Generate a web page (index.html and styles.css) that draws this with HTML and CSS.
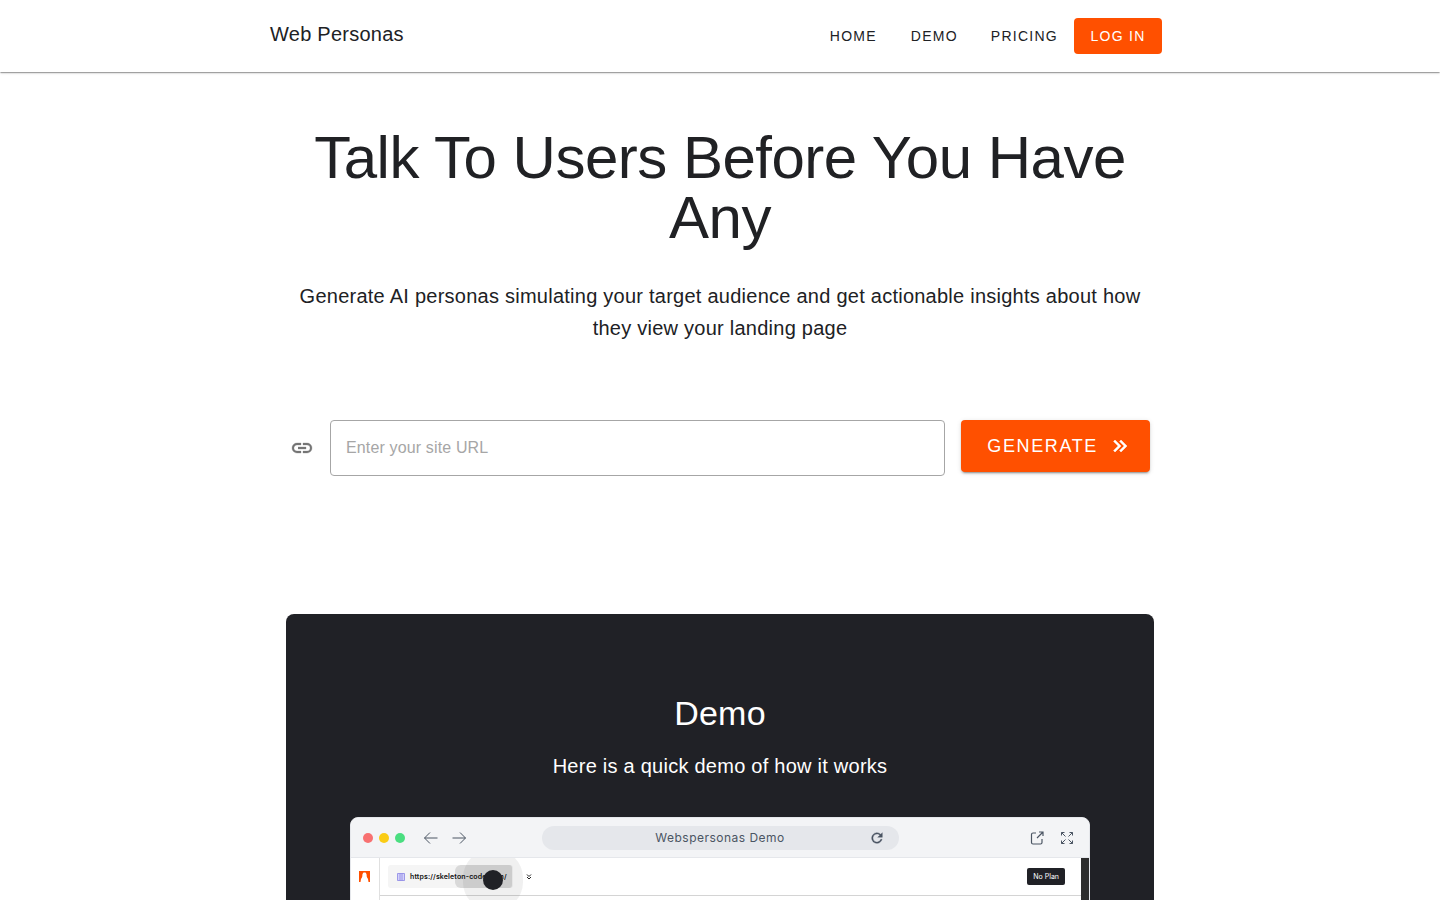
FILE: index.html
```html
<!DOCTYPE html>
<html lang="en">
<head>
<meta charset="utf-8">
<meta name="viewport" content="width=device-width, initial-scale=1">
<title>Web Personas</title>
<link rel="stylesheet" href="styles.css">
</head>
<body>
<header class="app-bar">
  <div class="app-bar-inner">
    <a class="brand" href="#">Web Personas</a>
    <nav class="nav">
      <a class="nav-link" href="#">HOME</a>
      <a class="nav-link" href="#demo">DEMO</a>
      <a class="nav-link" href="#pricing">PRICING</a>
      <a class="nav-link nav-primary" href="#login">LOG IN</a>
    </nav>
  </div>
</header>
<main class="container">
  <section class="hero">
    <h1 class="hero-title">Talk To Users Before You Have Any</h1>
    <p class="lead">Generate AI personas simulating your target audience and get actionable insights about how they view your landing page</p>
  </section>
  <form class="url-form">
    <label class="url-label" for="site-url" aria-label="Site URL">
      <svg width="24" height="24" viewBox="0 0 24 24" fill="currentColor" stroke="currentColor" stroke-width=".3"><path d="M3.9 12c0-1.71 1.39-3.1 3.1-3.1h4V7H7a5 5 0 0 0 0 10h4v-1.9H7c-1.71 0-3.1-1.39-3.1-3.1M8 13h8v-2H8m9-4h-4v1.9h4a3.1 3.1 0 0 1 0 6.2h-4V17h4a5 5 0 0 0 0-10"/></svg>
    </label>
    <input class="url-input" id="site-url" type="url" placeholder="Enter your site URL">
    <button class="generate" type="button"><span>GENERATE</span>
      <svg width="24" height="24" viewBox="0 0 24 24" fill="currentColor" stroke="currentColor" stroke-width=".5"><path d="M5.59 7.41 7 6l6 6-6 6-1.41-1.41L10.17 12zm6 0L13 6l6 6-6 6-1.41-1.41L16.17 12z"/></svg>
    </button>
  </form>
  <section class="demo" id="demo">
    <h2 class="demo-title">Demo</h2>
    <p class="demo-lead">Here is a quick demo of how it works</p>
    <div class="browser">
      <div class="toolbar">
        <div class="toolbar-side">
          <span class="dot dot-red"></span><span class="dot dot-yellow"></span><span class="dot dot-green"></span>
          <button class="icon-button arrow-back" type="button" aria-label="Back"><svg width="16" height="16" viewBox="0 0 16 16" fill="none" stroke="currentColor"><path d="M14.500 8H1.500M7 2.500 1.500 8 7 13.500"/></svg></button>
          <button class="icon-button" type="button" aria-label="Forward"><svg width="16" height="16" viewBox="0 0 16 16" fill="none" stroke="currentColor"><path d="M1.500 8h13M9 2.500 14.500 8 9 13.500"/></svg></button>
        </div>
        <div class="address">
          <span class="address-text">Webspersonas Demo</span>
          <button class="icon-button reload" type="button" aria-label="Reload"><svg width="16" height="16" viewBox="0 0 24 24" fill="currentColor" stroke="currentColor" stroke-width=".5"><path d="M17.65 6.35A8 8 0 1 0 19.73 14h-2.080A6 6 0 1 1 12 6c1.660 0 3.140.69 4.220 1.780L13 11h7V4z"/></svg></button>
        </div>
        <div class="toolbar-side toolbar-end">
          <button class="icon-button" type="button" aria-label="Open in new tab"><svg width="14" height="14" viewBox="0 0 14 14" fill="none" stroke="currentColor" stroke-width="1.200"><path d="M6 2H3a1.500 1.500 0 0 0-1.500 1.500v8A1.500 1.500 0 0 0 3 13h7.500a1.500 1.500 0 0 0 1.500-1.500V8M7 7l6-6M9 1h4v4"/></svg></button>
          <button class="icon-button" type="button" aria-label="Full screen"><svg width="14" height="14" viewBox="0 0 14 14" fill="none" stroke="currentColor"><path d="M1.500 4.500v-3h3M1.500 1.500l4 4M9.500 1.500h3v3M12.500 1.500l-4 4M1.500 9.500v3h3M1.500 12.500l4-4M9.500 12.500h3v-3M12.500 12.500l-4-4"/></svg></button>
        </div>
      </div>
      <div class="screen">
        <div class="rail"><svg width="11" height="11" viewBox="0 0 11 11"><path fill="#ff5000" d="M0 0h11v11H9.500L9 8 7.800 6 7.500 3 6.500 1.500h-2L3.500 3 3.200 6 2 8l-.5 3H0z"/></svg></div>
        <div class="view">
          <div class="view-bar">
            <div class="chip">
              <span class="ripple"></span>
              <svg class="chip-icon" width="8" height="8" viewBox="0 0 8 8" fill="#d5d2fa" stroke="#8a85e4" stroke-width=".8"><path d="M.5.5h7v7h-7zM3 .5v7M5 .5v7"/></svg>
              <span class="chip-text">https://skeleton-code.com/</span>
              <span class="pointer"></span>
            </div>
            <svg class="chevrons" width="6" height="6" viewBox="0 0 6 6" fill="none" stroke="#222"><path d="m1 .5 2 2 2-2M1 3l2 2 2-2"/></svg>
            <button class="plan" type="button">No Plan</button>
          </div>
        </div>
        <div class="scroll-track"></div>
      </div>
    </div>
  </section>
</main>
</body>
</html>
```
FILE: styles.css
```css
* { box-sizing: border-box; }
body {
  margin: 0;
  height: 100vh;
  overflow: hidden;
  background: #fff;
  color: #202124;
  font-family: "Liberation Sans", Arial, sans-serif;
}
h1, h2, p { margin: 0; font-weight: 400; }
a { color: inherit; text-decoration: none; }
button { font: inherit; border: 0; cursor: pointer; }
svg { display: block; flex: none; }

.app-bar {
  position: relative;
  box-shadow: 0 2px 1px -1px rgba(0,0,0,.2), 0 1px 1px rgba(0,0,0,.14), 0 1px 3px rgba(0,0,0,.12);
}
.app-bar-inner {
  max-width: 900px;
  height: 72px;
  margin: 0 auto;
  padding-right: 8px;
  display: flex;
  align-items: center;
  justify-content: space-between;
}
.brand { font-size: 20px; line-height: 32px; letter-spacing: .0125em; padding-bottom: 4px; }
.nav { display: flex; }
.nav-link {
  min-width: 81px;
  padding: 0 16px;
  font-size: 14px;
  line-height: 36px;
  letter-spacing: .09em;
  text-align: center;
  border-radius: 4px;
}
.nav-primary { min-width: 88px; background: #ff5000; color: #fff; }

.container { max-width: 900px; margin: 0 auto; padding: 56px 16px 64px; }
.hero { text-align: center; }
.hero-title { font-size: 60px; line-height: 60px; letter-spacing: -.0083em; }
.lead { margin-top: 32px; font-size: 20px; line-height: 32px; letter-spacing: .0125em; }

.url-form { display: flex; align-items: flex-start; gap: 16px; margin-top: 76px; padding: 0 4px; }
.url-label { height: 56px; display: flex; align-items: center; color: #757575; }
.url-input {
  flex: 1;
  min-width: 0;
  height: 56px;
  padding: 0 15px;
  border: 1px solid #a6a6a6;
  border-radius: 4px;
  background: #fff;
  color: #202124;
  font: 16px "Liberation Sans", Arial, sans-serif;
  letter-spacing: .009em;
}
.url-input::placeholder { color: #a6a6a6; opacity: 1; }
.generate {
  height: 52px;
  padding: 0 18px 0 26px;
  display: flex;
  align-items: center;
  gap: 10px;
  border-radius: 4px;
  background: #ff5000;
  color: #fff;
  font-size: 18px;
  letter-spacing: .09em;
  box-shadow: 0 3px 1px -2px rgba(0,0,0,.2), 0 2px 2px rgba(0,0,0,.14), 0 1px 5px rgba(0,0,0,.12);
}

.demo {
  margin-top: 138px;
  padding: 80px 64px 64px;
  border-radius: 8px;
  background: #202126;
  color: #fff;
  text-align: center;
}
.demo-title { font-size: 34px; line-height: 38px; letter-spacing: .0073em; }
.demo-lead { margin-top: 18px; font-size: 20px; line-height: 32px; letter-spacing: .0125em; }

.browser {
  margin-top: 35px;
  overflow: hidden;
  border: 1px solid #e5e7eb;
  border-radius: 8px;
  background: #fff;
  color: #4b5563;
  font-family: Inter, sans-serif;
}
.toolbar {
  height: 40px;
  padding: 0 12px;
  display: grid;
  grid-template-columns: 1fr 357px 1fr;
  align-items: center;
  background: #f3f4f6;
  border-bottom: 1px solid #e5e7eb;
}
.toolbar-side { display: flex; align-items: center; gap: 6px; }
.toolbar-end { justify-content: flex-end; gap: 16px; padding-right: 3px; }
.dot { width: 10px; height: 10px; border-radius: 50%; }
.dot-red { background: #f87171; }
.dot-yellow { background: #facc15; }
.dot-green { background: #4ade80; }
.icon-button { padding: 0; background: none; color: #4b5563; }
.arrow-back { margin: 0 6px 0 12px; }
.address {
  position: relative;
  height: 24px;
  display: flex;
  align-items: center;
  justify-content: center;
  border-radius: 12px;
  background: #e5e7eb;
}
.address-text { font-size: 12px; line-height: 16px; letter-spacing: .04em; }
.reload { position: absolute; right: 14px; top: 4px; }
.screen { display: flex; height: 416px; overflow: hidden; }
.rail { width: 29px; padding: 13px 8px; border-right: 1px solid #e0e0e0; }
.view { flex: 1; }
.view-bar {
  height: 38px;
  padding: 0 16px 0 8px;
  display: flex;
  align-items: center;
  border-bottom: 1px solid #d4d4d4;
}
.chip {
  position: relative;
  width: 125px;
  height: 23px;
  padding: 0 9px;
  display: flex;
  align-items: center;
  gap: 5px;
  border-radius: 3px;
  background: #f5f5f5;
}
.chip-text { position: relative; color: #111; font-size: 7px; font-weight: 600; letter-spacing: .02em; white-space: nowrap; }
.chip-icon { position: relative; }
.ripple {
  position: absolute;
  inset: 0 1px 0 67px;
  border-radius: 6px 3px 3px 6px;
  background: #d9d9d9;
}
.pointer {
  position: absolute;
  left: 95px;
  top: 5px;
  width: 20px;
  height: 20px;
  border-radius: 50%;
  background: #202126;
  box-shadow: 0 0 0 20px rgba(0,0,0,.06);
}
.chevrons { margin-left: 13px; }
.plan {
  height: 17px;
  margin-left: auto;
  padding: 0 6px;
  border-radius: 2px;
  background: #202126;
  color: #fff;
  font-size: 7px;
}
.scroll-track { width: 8px; background: #2d2d2d; }
```
